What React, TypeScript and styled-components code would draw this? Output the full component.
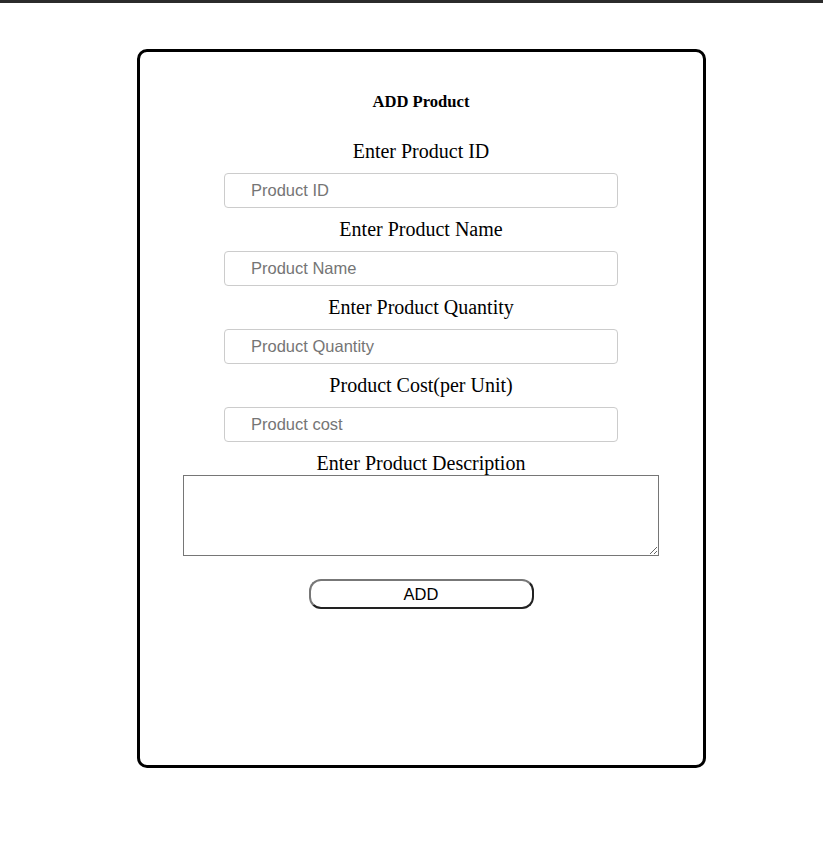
import React from "react";
import styled, { createGlobalStyle } from "styled-components";

const Global = createGlobalStyle`
  html, body { margin: 0; padding: 0; background: #fff; }
  body { font-family: "Liberation Serif", "Times New Roman", serif; }
`;

const TopBar = styled.div`
  height: 3px;
  background: #2b2b2b;
`;

const Page = styled.div`
  padding: 46px 0 0 137px;
`;

const Card = styled.form`
  box-sizing: border-box;
  width: 569px;
  height: 719px;
  border: 3px solid #000;
  border-radius: 10px;
  display: flex;
  flex-direction: column;
  align-items: center;
  padding: 40px 1px 0 0;
`;

const Title = styled.h4`
  margin: 0 0 29px;
  font-size: 16.6px;
  line-height: 19px;
  font-weight: bold;
  color: #000;
`;

const Label = styled.label`
  font-size: 20px;
  line-height: 23px;
  color: #000;
`;

const Input = styled.input`
  box-sizing: border-box;
  width: 394px;
  height: 35px;
  margin: 10px 0;
  padding: 0 0 0 26px;
  border: 1px solid #ccc;
  border-radius: 4px;
  font-family: "Liberation Sans", Arial, sans-serif;
  font-size: 16.5px;
  color: #000;
  outline: none;
  &::placeholder { color: #757575; }
`;

const TextArea = styled.textarea`
  box-sizing: border-box;
  width: 476px;
  height: 81px;
  margin: 0;
  border: 1px solid #767676;
  font-family: "Liberation Mono", monospace;
  font-size: 13px;
`;

const Button = styled.button`
  box-sizing: border-box;
  width: 225px;
  height: 30px;
  margin-top: 23px;
  background: #fff;
  border: 2px solid;
  border-color: #777 #222 #222 #777;
  border-radius: 12px;
  font-family: "Liberation Sans", Arial, sans-serif;
  font-size: 16.5px;
  color: #000;
  cursor: pointer;
`;

const fields = [
  { label: "Enter Product ID", placeholder: "Product ID" },
  { label: "Enter Product Name", placeholder: "Product Name" },
  { label: "Enter Product Quantity", placeholder: "Product Quantity" },
  { label: "Product Cost(per Unit)", placeholder: "Product cost" },
];

export default function App() {
  return (
    <>
      <Global />
      <TopBar />
      <Page>
        <Card onSubmit={(e) => e.preventDefault()}>
          <Title>ADD Product</Title>
          {fields.map((f) => (
            <React.Fragment key={f.label}>
              <Label>{f.label}</Label>
              <Input placeholder={f.placeholder} />
            </React.Fragment>
          ))}
          <Label>Enter Product Description</Label>
          <TextArea />
          <Button type="submit">ADD</Button>
        </Card>
      </Page>
    </>
  );
}
